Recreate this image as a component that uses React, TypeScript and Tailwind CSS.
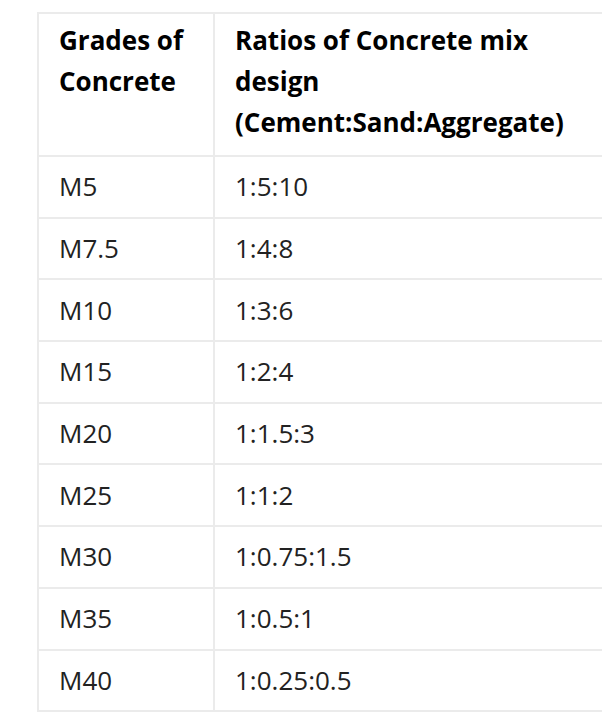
import React from 'react';

const rows: [string, string][] = [
    ['M5', '1:5:10'],
    ['M7.5', '1:4:8'],
    ['M10', '1:3:6'],
    ['M15', '1:2:4'],
    ['M20', '1:1.5:3'],
    ['M25', '1:1:2'],
    ['M30', '1:0.75:1.5'],
    ['M35', '1:0.5:1'],
    ['M40', '1:0.25:0.5'],
];

const App: React.FC = () => {
    return (
        <div className="w-[602px] h-[713px] overflow-hidden bg-white font-['Open_Sans',sans-serif]">
            <table className="ml-[37px] mt-[12px] border-collapse w-[620px] table-fixed text-[26px] text-[#222]">
                <colgroup>
                    <col className="w-[176px]" />
                    <col />
                </colgroup>
                <thead>
                    <tr>
                        <th className="border-2 border-[#ebebeb] px-5 pt-[6px] pb-[12px] text-left align-top font-bold leading-[41px] text-black">
                            Grades of Concrete
                        </th>
                        <th className="border-2 border-[#ebebeb] pl-5 pr-[60px] pt-[6px] pb-[12px] text-left align-top font-bold leading-[41px] text-black">
                            Ratios of Concrete mix design (Cement:Sand:Aggregate)
                        </th>
                    </tr>
                </thead>
                <tbody>
                    {rows.map(([grade, ratio]) => (
                        <tr key={grade} className="h-[61.7px]">
                            <td className="border-2 border-[#ebebeb] px-5 align-middle">{grade}</td>
                            <td className="border-2 border-[#ebebeb] px-5 align-middle">{ratio}</td>
                        </tr>
                    ))}
                </tbody>
            </table>
        </div>
    );
};

export default App;
